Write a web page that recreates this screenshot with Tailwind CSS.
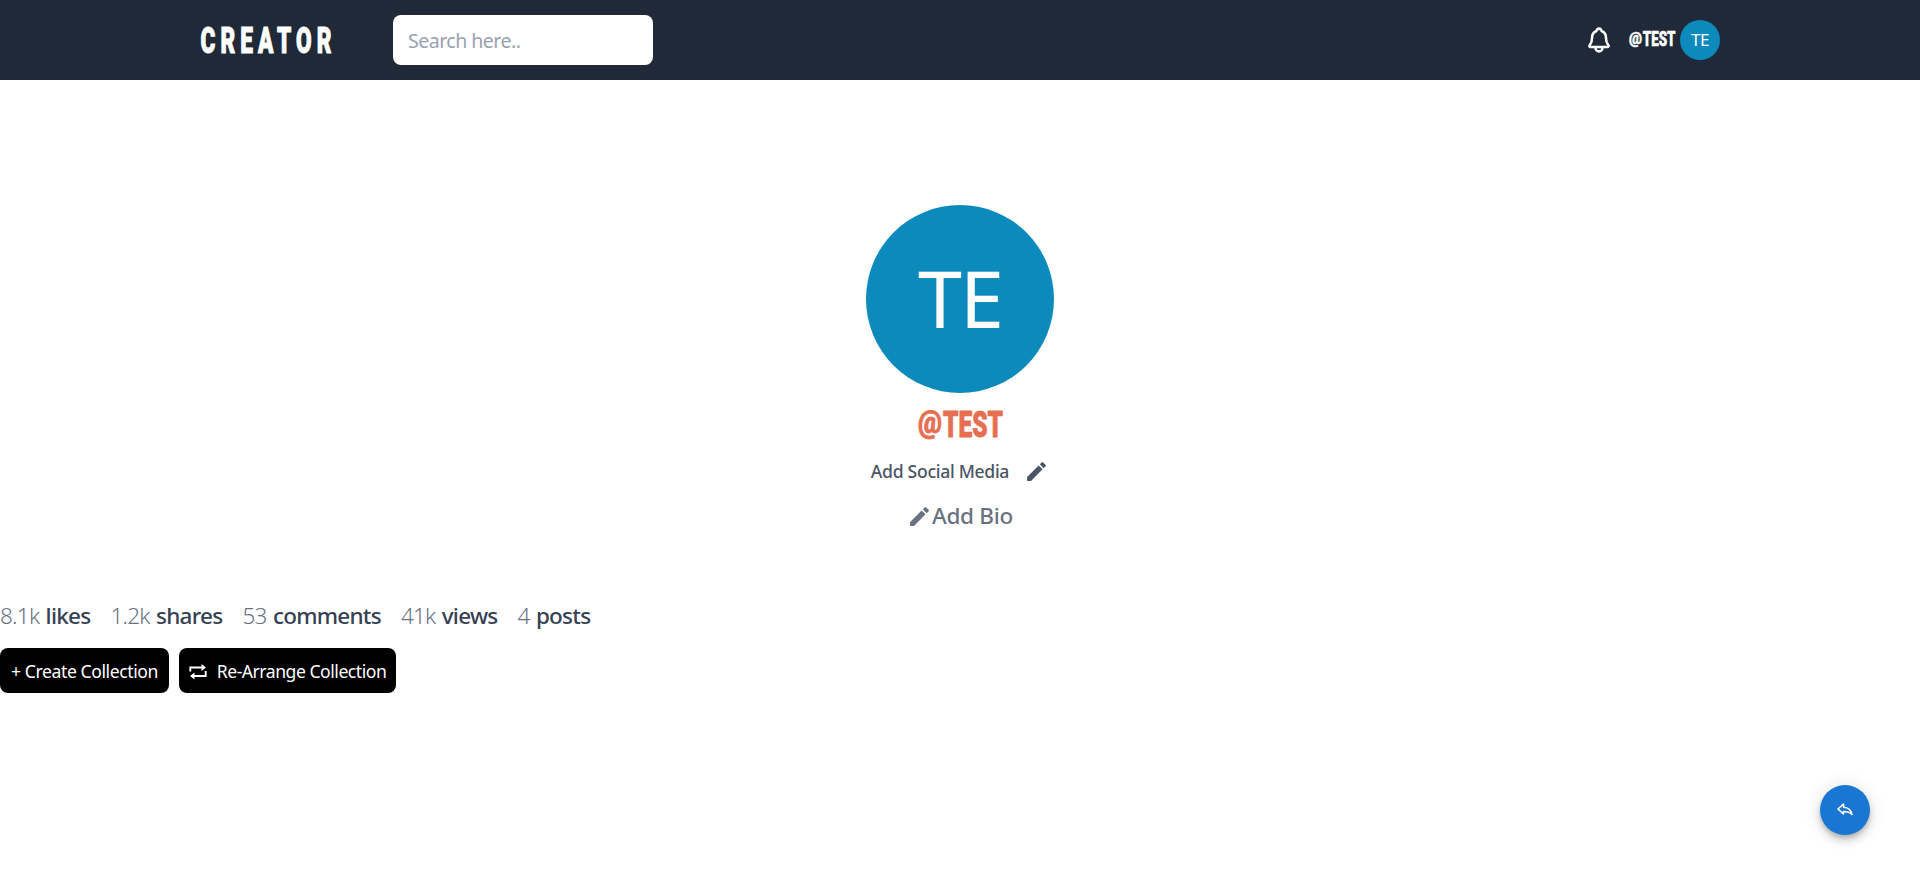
<!DOCTYPE html>
<html lang="en">
<head>
<meta charset="utf-8">
<title>Creator</title>
<script src="https://cdn.jsdelivr.net/npm/@tailwindcss/browser@4"></script>
</head>
<body class="h-[885px] overflow-hidden bg-white font-['Noto_Sans','Open_Sans',sans-serif]">
<header class="flex h-20 items-center justify-between bg-[#1f2937] px-[200px]">
  <div class="flex items-center">
    <svg class="h-14 w-[193px] overflow-visible" viewBox="0 0 193 56" role="img" fill="#fff" stroke="#fff" stroke-width="1">
      <text x="0.5" y="40.500" font-family="Roboto" font-weight="900" font-size="36" letter-spacing="8" textLength="136" lengthAdjust="spacingAndGlyphs">CREATOR</text>
    </svg>
    <input class="h-[50px] w-[260px] rounded-lg bg-white px-[15px] text-[19.6px] tracking-[-0.55px] text-gray-700 placeholder:text-gray-400" placeholder="Search here..">
  </div>
  <div class="flex items-center">
    <svg class="h-7 w-7" viewBox="0 0 512 512" fill="none" stroke="#fff" stroke-width="46" stroke-linecap="round" stroke-linejoin="round"><path d="M427.68 351.43C402 320 383.87 304 383.87 217.35 383.87 138 343.35 109.73 310 96c-4.43-1.82-8.6-6-9.95-10.55C294.2 65.54 277.8 48 256 48s-38.21 17.55-44 37.47c-1.35 4.6-5.52 8.71-9.95 10.53-33.39 13.75-73.87 41.92-73.87 121.35C128.13 304 110 320 84.32 351.43 73.68 364.45 83 384 101.61 384h308.88c18.51 0 27.77-19.61 17.19-32.57zM320 384v16a64 64 0 01-128 0v-16"/></svg>
    <svg class="ml-4 h-8 w-[49px] overflow-visible" viewBox="0 0 49 32" fill="#fff" stroke="#fff" stroke-width="0.5" font-family="Roboto" font-weight="900">
      <text x="0" y="20" font-size="16" textLength="13" lengthAdjust="spacingAndGlyphs">@</text>
      <text x="13.700" y="22" font-size="19.5" textLength="32.800" lengthAdjust="spacingAndGlyphs">TEST</text>
    </svg>
    <div class="ml-0.5 flex h-10 w-10 items-center justify-center rounded-full bg-[#0d8abc] pb-px text-[17px] tracking-[-0.5px] text-white">TE</div>
  </div>
</header>
<main>
  <section class="flex flex-col items-center pt-[125px]">
    <div class="flex h-[188px] w-[188px] items-center justify-center rounded-full bg-[#0d8abc] pb-[4px] text-[79px] leading-none tracking-[-2px] text-white">TE</div>
    <svg class="mt-1 h-14 w-[88px] overflow-visible" viewBox="0 0 88 56" fill="#e76f51" stroke="#e76f51" stroke-width="0.8" font-family="Roboto" font-weight="900">
      <text x="2" y="35.500" font-size="30.500" textLength="24" lengthAdjust="spacingAndGlyphs">@</text>
      <text x="27" y="40" font-size="37" textLength="60" lengthAdjust="spacingAndGlyphs">TEST</text>
    </svg>
    <div class="mt-1 flex h-7 items-center gap-[15px] text-gray-600">
      <span class="text-[17.6px] font-medium tracking-[-0.3px]">Add Social Media</span>
      <svg class="h-[25px] w-[25px]" viewBox="0 0 24 24" fill="currentColor"><path d="M3 17.25V21h3.75L17.81 9.94l-3.75-3.75L3 17.25zM20.71 7.04a.996.996 0 0 0 0-1.41l-2.34-2.34a.996.996 0 0 0-1.41 0l-1.83 1.83 3.75 3.75 1.83-1.83z"/></svg>
    </div>
    <div class="mt-[15px] flex h-8 items-center text-gray-500">
      <svg class="h-[25px] w-[25px]" viewBox="0 0 24 24" fill="currentColor"><path d="M3 17.25V21h3.75L17.81 9.94l-3.75-3.75L3 17.25zM20.71 7.04a.996.996 0 0 0 0-1.41l-2.34-2.34a.996.996 0 0 0-1.41 0l-1.83 1.83 3.75 3.75 1.83-1.83z"/></svg>
      <span class="text-[22.5px] font-medium tracking-[-0.3px]">Add Bio</span>
    </div>
  </section>
  <section class="mt-[68px] flex h-8 items-center gap-5 whitespace-nowrap text-[22.5px] font-light tracking-[-0.75px] text-gray-500 [word-spacing:1.2px]">
    <span>8.1k <b class="font-medium text-gray-700">likes</b></span>
    <span>1.2k <b class="font-medium text-gray-700">shares</b></span>
    <span>53 <b class="font-medium text-gray-700">comments</b></span>
    <span>41k <b class="font-medium text-gray-700">views</b></span>
    <span>4 <b class="font-medium text-gray-700">posts</b></span>
  </section>
  <section class="mt-4 flex gap-2.5 whitespace-nowrap text-[17.6px] tracking-[-0.42px] text-white">
    <button class="h-[45px] w-[169px] rounded-lg bg-black pt-0.5">+ Create Collection</button>
    <button class="flex h-[45px] w-[217px] items-center justify-center gap-2.5 rounded-lg bg-black pt-0.5">
      <svg class="h-[18px] w-[18px]" viewBox="0 0 18 18" fill="none" stroke="currentColor" stroke-width="1.9"><path d="M1.300 8.500V4.500H13M16.700 8v5H5"/><path d="M12.500 .9 17 4.500l-4.500 3.600zM5.500 9.400 1 13l4.500 3.600z" fill="currentColor" stroke="none"/></svg>
      <span class="tracking-[-0.48px]">Re-Arrange Collection</span>
    </button>
  </section>
</main>
<button class="fixed right-[50px] bottom-[50px] flex h-[50px] w-[50px] items-center justify-center rounded-full bg-[#1976d2] shadow-[0_3px_5px_-1px_rgba(0,0,0,0.2),0_6px_10px_0_rgba(0,0,0,0.14),0_1px_18px_0_rgba(0,0,0,0.12)]">
  <svg class="h-4 w-4" viewBox="0 0 16 16" fill="none" stroke="#fff" stroke-width="1.6" stroke-linejoin="round"><path d="M1 7 6.500 2v3.200c4 .2 7.500 2.600 8.500 7.300-2-2-4.500-3-8.500-3V12z"/></svg>
</button>
</body>
</html>
